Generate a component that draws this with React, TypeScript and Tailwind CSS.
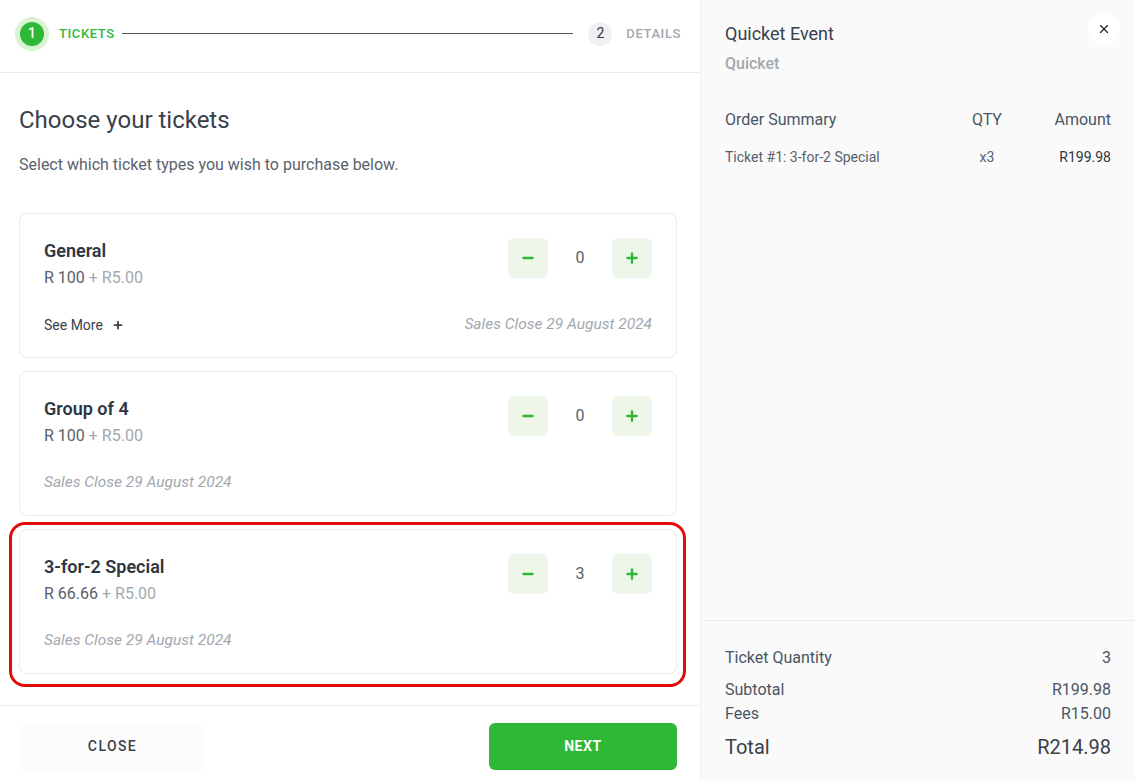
import { Minus, Plus, X } from "lucide-react";

interface Ticket {
    name: string;
    price: string;
    fee: string;
    qty: number;
    seeMore?: boolean;
    highlight?: boolean;
}

const tickets: Ticket[] = [
    { name: "General", price: "R 100", fee: "R5.00", qty: 0, seeMore: true },
    { name: "Group of 4", price: "R 100", fee: "R5.00", qty: 0 },
    { name: "3-for-2 Special", price: "R 66.66", fee: "R5.00", qty: 3, highlight: true },
];

function TicketCard({ ticket }: { ticket: Ticket }) {
    return (
        <div className="relative rounded-lg border border-[#ebebeb] bg-white px-6 pt-6 pb-[21px]">
            {ticket.highlight && (
                <div className="pointer-events-none absolute -left-[11px] -right-[10px] -top-[8px] -bottom-[14px] rounded-[16px] border-[3px] border-[#e30a0a]" />
            )}
            <div className="flex items-start justify-between">
                <div>
                    <div className="text-[18px] font-semibold leading-[26px] text-[#2f3640]">{ticket.name}</div>
                    <div className="mt-[2px] text-[16px] leading-[24px] text-[#58606b]">
                        {ticket.price} <span className="text-[#a3a8ae]">+ {ticket.fee}</span>
                    </div>
                </div>
                <div className="flex items-center">
                    <button className="flex h-10 w-10 items-center justify-center rounded-md bg-[#eef6ea] text-[#2eb835]">
                        <Minus className="h-4 w-4" strokeWidth={3.5} />
                    </button>
                    <span className="w-16 text-center text-[16px] text-[#5a626d]">{ticket.qty}</span>
                    <button className="flex h-10 w-10 items-center justify-center rounded-md bg-[#eef6ea] text-[#2eb835]">
                        <Plus className="h-4 w-4" strokeWidth={3.5} />
                    </button>
                </div>
            </div>
            <div className="mt-[24px] flex h-[22px] items-center justify-between">
                {ticket.seeMore ? (
                    <span className="flex items-center gap-[9px] text-[14px] text-[#3a414b]">
                        See More <Plus className="h-3 w-3 text-[#3a414b]" strokeWidth={3.5} />
                    </span>
                ) : (
                    <span className="text-[15.5px] italic text-[#a3a8ae]">Sales Close 29 August 2024</span>
                )}
                {ticket.seeMore && (
                    <span className="text-[15.5px] italic text-[#a3a8ae]">Sales Close 29 August 2024</span>
                )}
            </div>
        </div>
    );
}

export default function App() {
    return (
        <div className="flex h-[781px] w-[1135px] overflow-hidden bg-white font-['Roboto',sans-serif]">
            {/* Left: ticket selection */}
            <div className="flex w-[701px] shrink-0 flex-col border-r border-[#f1f1f1]">
                <div className="flex h-[73px] shrink-0 items-center border-b border-[#ebebeb] pl-[15px] pr-[19px] pb-[5px]">
                    <div className="flex h-[34px] w-[34px] items-center justify-center rounded-full bg-[#d9f2d3]">
                        <div className="flex h-6 w-6 items-center justify-center rounded-full bg-[#2eb835] text-[14px] font-medium text-white">1</div>
                    </div>
                    <span className="ml-[10px] text-[13px] font-medium tracking-[0.6px] text-[#2eb835]">TICKETS</span>
                    <div className="ml-[7px] mr-[15px] h-px flex-1 bg-[#4a5562]" />
                    <div className="flex h-6 w-6 items-center justify-center rounded-full bg-[#efeff4] text-[14px] text-[#2f3640]">2</div>
                    <span className="ml-[14px] text-[13px] font-medium tracking-[0.6px] text-[#a3a8ae]">DETAILS</span>
                </div>

                <div className="flex-1 overflow-hidden pl-[19px] pr-[23px] pt-[33px]">
                    <h1 className="text-[24px] leading-[28px] text-[#38414c]">Choose your tickets</h1>
                    <p className="mt-[19px] text-[16px] text-[#5a626d]">Select which ticket types you wish to purchase below.</p>
                    <div className="mt-[36px] flex flex-col gap-[13px]">
                        {tickets.map((t) => (
                            <TicketCard key={t.name} ticket={t} />
                        ))}
                    </div>
                </div>

                <div className="flex h-[76px] shrink-0 items-start justify-between border-t border-[#ebebeb] pl-[19px] pr-[23px] pt-[17px]">
                    <button className="h-[47px] w-[187px] rounded-md bg-[#fcfcfc] text-[14px] font-medium tracking-[1.4px] text-[#3a414b]">CLOSE</button>
                    <button className="h-[47px] w-[188px] rounded-md bg-[#2eb835] text-[14px] font-bold tracking-[0.6px] text-white">NEXT</button>
                </div>
            </div>

            {/* Right: order summary */}
            <div className="flex flex-1 flex-col bg-[#fafafb]">
                <div className="flex-1 px-6 pt-[23px]">
                    <div className="flex items-start justify-between">
                        <div>
                            <div className="text-[18px] leading-[22px] text-[#38414c]">Quicket Event</div>
                            <div className="mt-[7px] text-[16px] font-medium text-[#a3a8ae]">Quicket</div>
                        </div>
                        <button className="-mr-[9px] -mt-[10px] flex h-8 w-8 items-center justify-center rounded-full bg-white text-[#1f2328]">
                            <X className="h-[14px] w-[14px]" strokeWidth={2} />
                        </button>
                    </div>
                    <div className="mt-[32px] flex items-center text-[16px] text-[#4a5562]">
                        <span className="flex-1">Order Summary</span>
                        <span className="w-[72px] text-center">QTY</span>
                        <span className="w-[88px] text-right">Amount</span>
                    </div>
                    <div className="mt-[15px] flex items-center text-[14px] text-[#58606b]">
                        <span className="flex-1">Ticket #1: 3-for-2 Special</span>
                        <span className="w-[72px] text-center">x3</span>
                        <span className="w-[88px] text-right text-[#2f3640]">R199.98</span>
                    </div>
                </div>

                <div className="shrink-0 border-t border-[#ececee] px-6 pt-[25px] pb-[20px] text-[16px] text-[#4a5562]">
                    <div className="flex justify-between leading-[24px]">
                        <span>Ticket Quantity</span>
                        <span>3</span>
                    </div>
                    <div className="mt-[8px] flex justify-between leading-[24px]">
                        <span>Subtotal</span>
                        <span>R199.98</span>
                    </div>
                    <div className="flex justify-between leading-[24px]">
                        <span>Fees</span>
                        <span>R15.00</span>
                    </div>
                    <div className="mt-[7px] flex justify-between text-[20px] leading-[28px] text-[#38414c]">
                        <span>Total</span>
                        <span>R214.98</span>
                    </div>
                </div>
            </div>
        </div>
    );
}
